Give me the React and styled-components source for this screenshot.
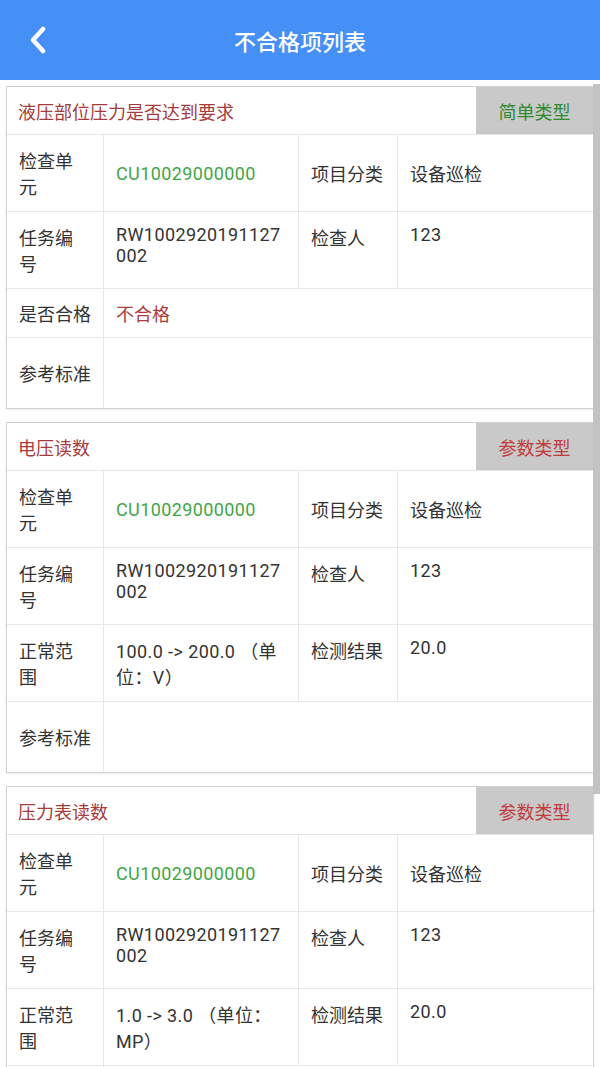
import React from "react";
import styled, { createGlobalStyle } from "styled-components";

const GlobalStyle = createGlobalStyle`
  html, body { margin: 0; padding: 0; background: #ffffff; }
  body {
    font-family: Roboto, "Noto Sans CJK SC", "Noto Sans", sans-serif;
    color: #333333;
    -webkit-font-smoothing: antialiased;
  }
  * { box-sizing: border-box; }
`;

const Page = styled.div`
  position: relative;
  width: 600px;
  height: 1067px;
  overflow: hidden;
  background: #ffffff;
`;

const Header = styled.header`
  height: 80px;
  background: #4590f6;
  display: grid;
  grid-template-columns: 90px 1fr 90px;
  align-items: center;
`;

const BackButton = styled.button`
  border: 0;
  background: transparent;
  padding: 0 0 0 28px;
  height: 80px;
  display: flex;
  align-items: center;
  cursor: pointer;
`;

const Title = styled.h1`
  margin: 0;
  text-align: center;
  color: #ffffff;
  font-size: 22px;
  font-weight: 500;
`;

const List = styled.main`
  display: flex;
  flex-direction: column;
  gap: 13px;
  padding: 6px 6px 0 6px;
`;

const Card = styled.section`
  border: 1px solid #d3d3d3;
  background: #ffffff;
  box-shadow: 0 1px 2px rgba(0, 0, 0, 0.08);
`;

const CardHead = styled.div`
  display: flex;
  align-items: stretch;
  height: 48px;
  border-bottom: 1px solid #e4e4e4;
`;

const CardTitle = styled.div`
  flex: 1;
  display: flex;
  align-items: center;
  padding-left: 11px;
  font-size: 18px;
  color: #a63b3c;
`;

const Tag = styled.div`
  width: 117px;
  display: flex;
  align-items: center;
  justify-content: center;
  background: #c9c9c9;
  font-size: 18px;
  color: ${(p) => (p.$kind === "simple" ? "#2e8b30" : "#c23b3d")};
`;

const Row = styled.div`
  display: grid;
  grid-template-columns: 97px 195px 99px 1fr;
  border-bottom: ${(p) => (p.$lastRow ? "0" : "1px solid #e8e8e8")};
  min-height: ${(p) => p.$minH || 0}px;
  align-items: stretch;
`;

const Cell = styled.div`
  padding: ${(p) => (p.$tight ? "11px" : "12px")} 13px ${(p) => (p.$tight ? "11px" : "12px")} 12px;
  font-size: 18px;
  line-height: normal;
  letter-spacing: ${(p) => (p.$value ? "0.4px" : "0")};
  word-break: normal;
  overflow-wrap: anywhere;
  white-space: ${(p) => (p.$nowrap ? "nowrap" : "normal")};
  border-right: ${(p) => (p.$last ? "0" : "1px solid #e8e8e8")};
  grid-column: ${(p) => (p.$span ? `span ${p.$span}` : "auto")};
  display: flex;
  align-items: ${(p) => (p.$center ? "center" : "flex-start")};
  color: ${(p) => p.$color || "#333333"};
`;

const Scrollbar = styled.div`
  position: absolute;
  right: 0;
  top: 84px;
  width: 7px;
  height: 710px;
  background: #c2c2c2;
`;

const Chevron = () => (
  <svg width="20" height="28" viewBox="0 0 20 28" fill="none">
    <polyline
      points="15,3 5,14 15,25"
      stroke="#ffffff"
      strokeWidth="4.5"
      strokeLinecap="round"
      strokeLinejoin="round"
    />
  </svg>
);

const items = [
  {
    title: "液压部位压力是否达到要求",
    kind: "simple",
    tag: "简单类型",
    unit: "CU10029000000",
    category: "设备巡检",
    task: "RW1002920191127002",
    inspector: "123",
    pass: "不合格",
  },
  {
    title: "电压读数",
    kind: "param",
    tag: "参数类型",
    unit: "CU10029000000",
    category: "设备巡检",
    task: "RW1002920191127002",
    inspector: "123",
    range: "100.0 -> 200.0 （单位：V）",
    result: "20.0",
  },
  {
    title: "压力表读数",
    kind: "param",
    tag: "参数类型",
    unit: "CU10029000000",
    category: "设备巡检",
    task: "RW1002920191127002",
    inspector: "123",
    range: "1.0 -> 3.0 （单位：MP）",
    result: "20.0",
  },
];

const ItemCard = ({ item }) => (
  <Card>
    <CardHead>
      <CardTitle>{item.title}</CardTitle>
      <Tag $kind={item.kind}>{item.tag}</Tag>
    </CardHead>
    <Row>
      <Cell $center>检查单元</Cell>
      <Cell $center $value $color="#43a447">{item.unit}</Cell>
      <Cell $center>项目分类</Cell>
      <Cell $center $last>{item.category}</Cell>
    </Row>
    <Row>
      <Cell>任务编号</Cell>
      <Cell $value>{item.task}</Cell>
      <Cell>检查人</Cell>
      <Cell $value $last>{item.inspector}</Cell>
    </Row>
    {item.kind === "simple" ? (
      <Row>
        <Cell $nowrap $tight>是否合格</Cell>
        <Cell $span={3} $last $tight $color="#ad3a3b">{item.pass}</Cell>
      </Row>
    ) : (
      <Row>
        <Cell>正常范围</Cell>
        <Cell $value>{item.range}</Cell>
        <Cell>检测结果</Cell>
        <Cell $value $last>{item.result}</Cell>
      </Row>
    )}
    <Row $minH={70} $lastRow>
      <Cell $center $nowrap>参考标准</Cell>
      <Cell $span={3} $last />
    </Row>
  </Card>
);

export default function App() {
  return (
    <Page>
      <GlobalStyle />
      <Header>
        <BackButton aria-label="返回">
          <Chevron />
        </BackButton>
        <Title>不合格项列表</Title>
        <div />
      </Header>
      <List>
        {items.map((it, i) => (
          <ItemCard key={i} item={it} />
        ))}
      </List>
      <Scrollbar />
    </Page>
  );
}
